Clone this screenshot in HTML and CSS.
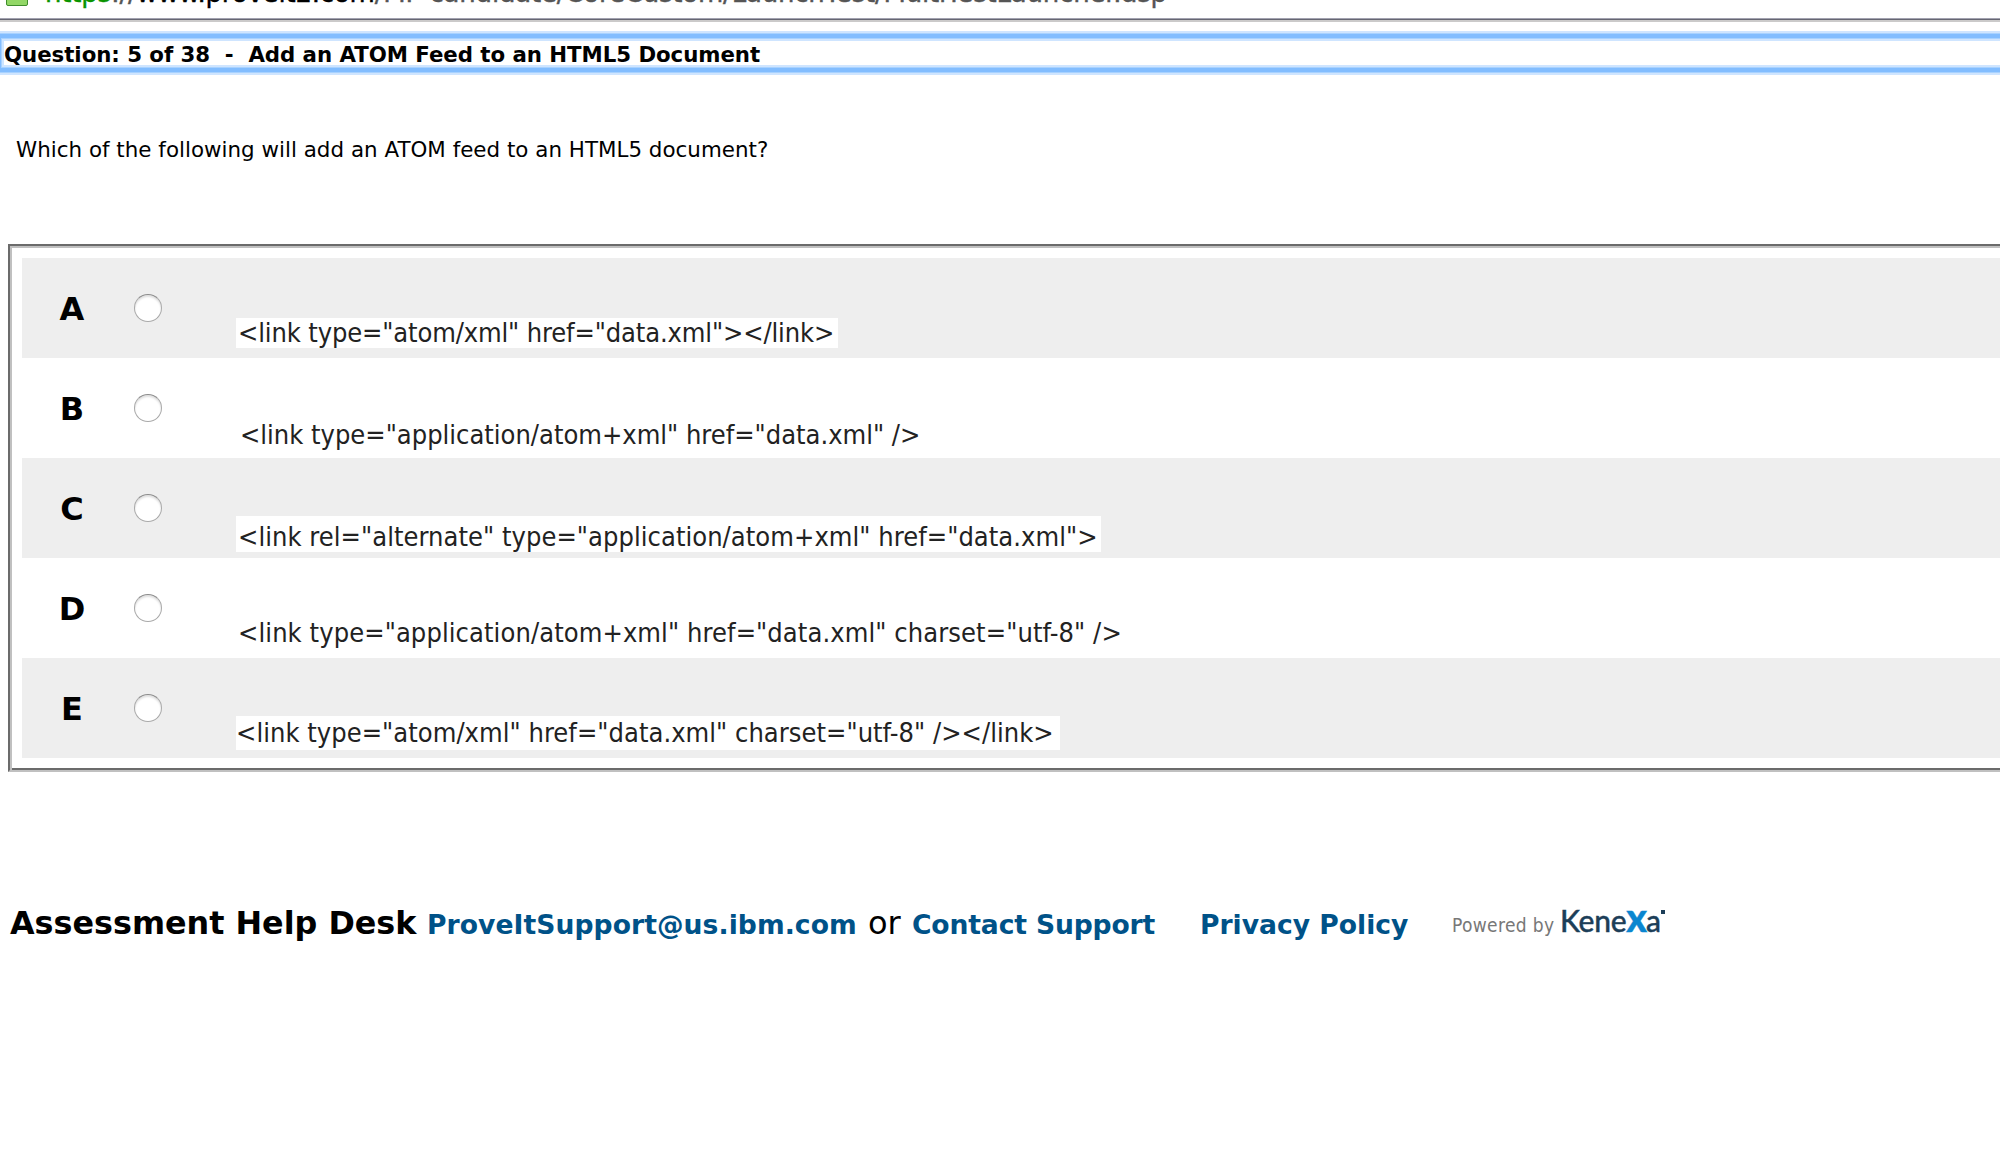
FILE: index.html
```
<!DOCTYPE html>
<html lang="en">
<head>
<meta charset="utf-8">
<title>Question 5 of 38</title>
<link rel="stylesheet" href="styles.css">
</head>
<body>
<header class="address">
  <span class="lock"></span>
  <span class="url"><span class="secure">https</span>://<span class="host">www.proveit2.com</span>/MF-candidate/CoreCustom/LaunchTest/MultiTestLauncher.asp</span>
</header>
<h1 class="title">Question: 5 of 38 &nbsp;- &nbsp;Add an ATOM Feed to an HTML5 Document</h1>
<main>
  <p class="question">Which of the following will add an ATOM feed to an HTML5 document?</p>
  <div class="answers">
    <label class="row"><b class="letter">A</b><input class="radio" type="radio" name="answer"><code class="code code-a">&lt;link type="atom/xml" href="data.xml"&gt;&lt;/link&gt;</code></label>
    <label class="row"><b class="letter">B</b><input class="radio" type="radio" name="answer"><code class="code code-b">&lt;link type="application/atom+xml" href="data.xml" /&gt;</code></label>
    <label class="row"><b class="letter">C</b><input class="radio" type="radio" name="answer"><code class="code code-c">&lt;link rel="alternate" type="application/atom+xml" href="data.xml"&gt;</code></label>
    <label class="row"><b class="letter">D</b><input class="radio" type="radio" name="answer"><code class="code code-d">&lt;link type="application/atom+xml" href="data.xml" charset="utf-8" /&gt;</code></label>
    <label class="row"><b class="letter">E</b><input class="radio" type="radio" name="answer"><code class="code code-e">&lt;link type="atom/xml" href="data.xml" charset="utf-8" /&gt;&lt;/link&gt;</code></label>
  </div>
</main>
<footer class="footer">
  <b class="desk">Assessment Help Desk</b>
  <a class="link mail">ProveItSupport@us.ibm.com</a>
  <span class="or">or</span>
  <a class="link contact">Contact Support</a>
  <a class="link privacy">Privacy Policy</a>
  <span class="powered">Powered by</span>
  <span class="brand">Kene<span class="brand-x">x</span>a<span class="brand-dot"></span></span>
</footer>
</body>
</html>
```
FILE: styles.css
```
* { box-sizing: border-box; }

body {
  margin: 0;
  height: 1156px;
  overflow: hidden;
  background: #fff;
  color: #000;
  font-family: "DejaVu Sans", Verdana, sans-serif;
}

/* Address bar, scrolled mostly out of view */
.address {
  display: flex;
  align-items: flex-end;
  height: 22px;
  padding: 0 0 14px 6px;
  border-bottom: 2px solid #cbcaca;
  background: linear-gradient(#a2a2b0, #a2a2b0) 0 18px / 100% 1px no-repeat,
    linear-gradient(#666672, #666672) 0 19px / 100% 1px no-repeat;
  white-space: nowrap;
}
.lock {
  width: 22px;
  height: 22px;
  flex: none;
  border: 1px solid #3f8d2c;
  border-radius: 2px;
  background: #92d766;
}
.url {
  margin-left: 17px;
  height: 26px;
  font-size: 26px;
  line-height: 26px;
  letter-spacing: -0.2px;
  color: #555;
  -webkit-text-stroke: 0.4px;
}
.secure { color: #0a9400; }
.host { color: #000; }

/* Focused question heading */
.title {
  height: 44px;
  margin: 9px -20px 0 -6px;
  padding: 12px 0 8px 10px;
  border-radius: 6px;
  box-shadow: inset 0 0 0 2px #cfe5ff, inset 0 0 0 3px #a8d2ff,
    inset 0 0 0 7px #82bdff, inset 0 0 0 8px #a8d2ff, inset 0 0 0 10px #cfe5ff;
  font-size: 21.3px;
  line-height: 24px;
  letter-spacing: -0.04px;
  white-space: pre;
}

.question {
  margin: 61px 0 0 16px;
  height: 108px;
  font-size: 21.4px;
  line-height: 28px;
  letter-spacing: 0.02px;
}

.answers {
  width: 2020px;
  margin-left: 8px;
  padding: 12px;
  border: 2px solid #6b6b6b;
  border-bottom-color: #c0c0c0;
  box-shadow: inset 2px 2px #c0c0c0, inset 0 -2px #6b6b6b;
}
.row {
  display: flex;
  height: 100px;
  align-items: flex-start;
}
.row:nth-child(odd) { background: #eee; }
.letter {
  width: 100px;
  padding-top: 31px;
  font-size: 32px;
  line-height: 40px;
  text-align: center;
}
.radio {
  appearance: none;
  width: 28px;
  height: 28px;
  margin: 36px 0 0 12px;
  border: 1px solid #a9a9a9;
  border-top-color: #8c8c8c;
  border-radius: 50%;
  background: #fff;
  box-shadow: inset 0 2px 2px #e0e0e0;
}
.code {
  height: 30px;
  margin: 60px 0 0 74px;
  padding-left: 2px;
  background: #fff;
  color: #222;
  font: 27px/30px "DejaVu Sans Condensed", "DejaVu Sans", sans-serif;
  font-stretch: condensed;
  white-space: nowrap;
}
.code-a { width: 602px; letter-spacing: -0.13px; }
.code-b { margin-top: 62px; padding-left: 4px; letter-spacing: 0; }
.code-c { width: 865px; height: 36px; margin-top: 58px; padding-top: 6px; letter-spacing: 0.05px; }
.code-d { height: 26px; letter-spacing: 0.09px; }
.code-e { width: 824px; height: 34px; margin-top: 58px; padding-left: 0; padding-top: 2px; letter-spacing: 0.04px; }

.footer {
  display: flex;
  align-items: baseline;
  margin: 131px 0 0 10px;
  line-height: 40px;
  white-space: nowrap;
}
.desk { width: 417px; font-size: 31.8px; }
.link { color: #005288; font-size: 26.6px; font-weight: bold; }
.mail { width: 441px; letter-spacing: 0.06px; }
.or { width: 44px; font-size: 32px; }
.contact { width: 288px; letter-spacing: -0.15px; }
.privacy { width: 252px; }
.powered {
  width: 108px;
  color: #777;
  font: 19px/30px "DejaVu Sans Condensed", "DejaVu Sans", sans-serif;
  font-stretch: condensed;
  letter-spacing: 0.35px;
  position: relative;
  top: -2px;
}
.brand {
  position: relative;
  top: -2px;
  color: #1c3e58;
  font: 500 30px/30px Lato, sans-serif;
  letter-spacing: -0.3px;
  -webkit-text-stroke: 0.4px;
}
.brand-x { color: #0a86d0; font-size: 39px; font-weight: 900; letter-spacing: -1px; }
.brand-dot {
  position: absolute;
  top: 8px;
  right: -4px;
  width: 4px;
  height: 4px;
  background: #1c3e58;
}
```
